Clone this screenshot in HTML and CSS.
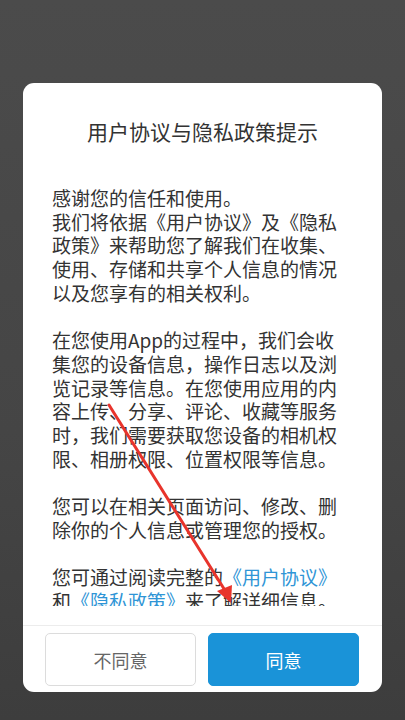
FILE: index.html
```html
<!DOCTYPE html>
<html lang="zh">
<head>
<meta charset="utf-8">
<title>用户协议与隐私政策提示</title>
<link rel="stylesheet" href="styles.css">
</head>
<body>
<div class="screen">
  <div class="dialog">
    <h1 class="title">用户协议与隐私政策提示</h1>
    <div class="body">
      <p class="para">感谢您的信任和使用。<br>我们将依据《用户协议》及《隐私政策》来帮助您了解我们在收集、使用、存储和共享个人信息的情况以及您享有的相关权利。</p>
      <p class="para">在您使用App的过程中，我们会收集您的设备信息，操作日志以及浏览记录等信息。在您使用应用的内容上传、分享、评论、收藏等服务时，我们需要获取您设备的相机权限、相册权限、位置权限等信息。</p>
      <p class="para">您可以在相关页面访问、修改、删除你的个人信息或管理您的授权。</p>
      <p class="para">您可通过阅读完整的<span class="link">《用户协议》</span>和<span class="link">《隐私政策》</span>来了解详细信息。</p>
    </div>
    <div class="footer">
      <button class="btn btn-deny">不同意</button>
      <button class="btn btn-agree">同意</button>
    </div>
  </div>
  <svg class="arrow" width="405" height="720" viewBox="0 0 405 720">
    <line x1="109" y1="405" x2="226" y2="592" stroke="#e8342c" stroke-width="3" stroke-linecap="round"/>
    <polygon points="231,603 217,591 232,585" fill="#e8342c"/>
  </svg>
</div>
</body>
</html>
```
FILE: styles.css
```css
html, body {
  margin: 0;
  padding: 0;
}
body {
  width: 405px;
  height: 720px;
  overflow: hidden;
  font-family: "Noto Sans CJK SC", "Noto Sans", sans-serif;
}
.screen {
  position: relative;
  width: 405px;
  height: 720px;
  background: linear-gradient(#4b4b4b, #454545 60%, #3d3d3d);
  padding-top: 83px;
  box-sizing: border-box;
}
.dialog {
  margin: 0 23px;
  width: 359px;
  background: #fff;
  border-radius: 11px;
  display: flex;
  flex-direction: column;
}
.title {
  margin: 34px 0 0;
  font-size: 21px;
  line-height: 28px;
  font-weight: normal;
  color: #333;
  text-align: center;
}
.body {
  margin-top: 41px;
  height: 420px;
  overflow: hidden;
  padding: 0 38px 0 29px;
}
.para {
  margin: 0 0 23.7px;
  font-size: 19px;
  line-height: 23.7px;
  color: #333;
}
.link {
  color: #2f95d6;
}
.footer {
  margin-top: 19px;
  border-top: 1px solid #ececec;
  padding: 7px 23px 6px 22px;
  display: flex;
  gap: 12px;
}
.btn {
  flex: 1;
  height: 53px;
  border-radius: 5px;
  font-family: "Noto Sans CJK SC", "Noto Sans", sans-serif;
  font-size: 18px;
  padding: 0;
}
.btn-deny {
  background: #fff;
  border: 1px solid #dcdcdc;
  color: #666;
}
.btn-agree {
  background: #1a93d8;
  border: 1px solid #1a93d8;
  color: #fff;
}
.arrow {
  position: absolute;
  left: 0;
  top: 0;
  pointer-events: none;
}
```
